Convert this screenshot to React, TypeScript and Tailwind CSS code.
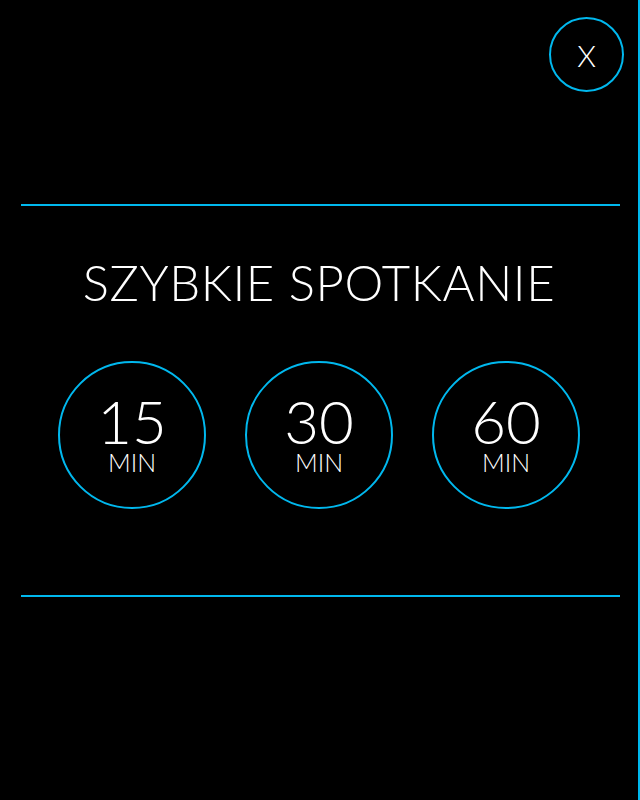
import React from "react";

const durations = ["15", "30", "60"];

export default function App() {
  return (
    <div className="w-[640px] h-[800px] bg-black border-r-2 border-[#00b8ee] flex flex-col font-['Lato',sans-serif] text-white">
      <div className="flex justify-end pt-[17px] pr-[14px]">
        <button className="w-[75px] h-[75px] rounded-full border-2 border-[#00b8ee] flex items-center justify-center text-[30px] font-light leading-none">
          X
        </button>
      </div>

      <div className="mt-[112px] ml-[21px] mr-[18px] h-[2px] bg-[#00b8ee]" />

      <h1 className="mt-[52px] text-center text-[49px] font-light leading-none tracking-[0.6px]">
        SZYBKIE SPOTKANIE
      </h1>

      <div className="mt-[54px] flex justify-center gap-[39px]">
        {durations.map((d) => (
          <button
            key={d}
            className="w-[148px] h-[148px] rounded-full border-2 border-[#00b8ee] flex flex-col items-center justify-center"
          >
            <span className="text-[60px] font-light leading-[48px]">{d}</span>
            <span className="text-[25px] font-light leading-[22px] mt-[6px]">MIN</span>
          </button>
        ))}
      </div>

      <div className="mt-[86px] ml-[21px] mr-[18px] h-[2px] bg-[#00b8ee]" />
    </div>
  );
}
